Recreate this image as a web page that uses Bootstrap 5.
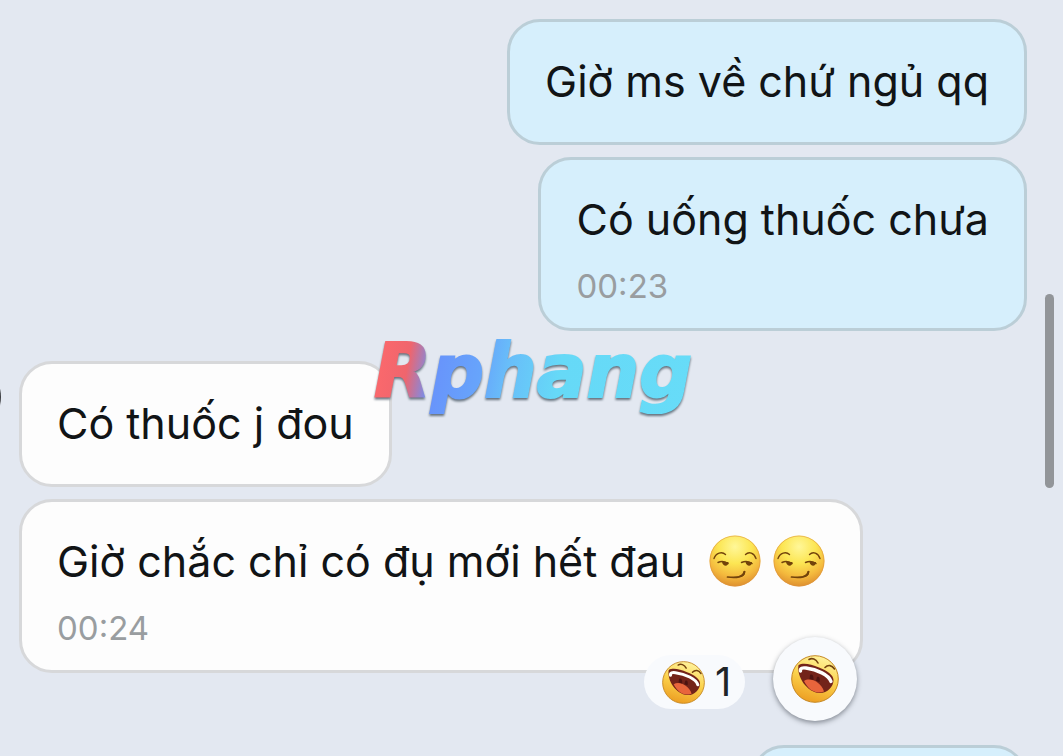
<!DOCTYPE html>
<html lang="vi">
<head>
<meta charset="utf-8">
<meta name="viewport" content="width=device-width, initial-scale=1">
<title>Chat</title>
<link href="https://cdn.jsdelivr.net/npm/bootstrap@5.3.0/dist/css/bootstrap.min.css" rel="stylesheet">
<style>
  body { background: #e3e8f1; font-family: Inter, "Noto Sans", sans-serif; color: #111416; }
  .chat { gap: 12px; padding: 19px 36px 0 19px; }
  .bubble { border: 3px solid #d7d8da; border-radius: 33px; background: #fdfdfd; padding: 32px 35px 34px; }
  .bubble.mine { background: #d6effc; border-color: #bbced7; }
  .bubble.timed { padding-bottom: 22px; }
  .bubble p { font-size: 43px; line-height: 54px; }
  .bubble time { font-size: 33px; line-height: 40px; margin-top: 20px; color: #999da0; }
  .group-start { margin-top: 18px; }
  .next-group { margin-top: 60px; min-width: 276px; min-height: 126px; }
  .with-faces { gap: 12px; }
  .smirk { width: 52px; height: 52px; }
  .reactions { right: 3px; bottom: -51px; gap: 28px; }
  .reactions button { background: #f8fafd; border: 0; color: #202427; }
  .tally { height: 54px; padding: 0 14px 0 18px; gap: 10px; margin-bottom: 12px; border-radius: 27px; font-size: 40px; line-height: 54px; }
  .tally svg { width: 43px; height: 43px; }
  .react { width: 84px; height: 84px; box-shadow: 0 2px 5px rgba(40, 45, 55, .5); }
  .react svg { width: 48px; height: 48px; }
  .avatar { width: 68px; height: 68px; left: -67px; top: 363px; background: #3c3e42; }
  .thumb { width: 9px; height: 194px; right: 9px; top: 294px; background: #929599; border-radius: 5px; }
  .watermark { left: 374px; top: 328px; font: italic bold 74px/86px "DejaVu Sans", sans-serif; color: transparent; -webkit-text-stroke: 2px transparent;
    background: linear-gradient(100deg, #ff6a6c 0%, #ef656d 12%, #6893fb 20%, #67a4fb 34%, #68bdf9 42%, #66d9f7 58%, #67dcf8 100%);
    -webkit-background-clip: text; background-clip: text; filter: drop-shadow(0 2px 1px #66737f); pointer-events: none; }
</style>
</head>
<body>
<svg class="position-absolute" width="0" height="0" aria-hidden="true">
  <defs>
    <radialGradient id="gold" cx=".5" cy=".22" r=".82">
      <stop offset="0" stop-color="#fff799"/><stop offset=".4" stop-color="#fce653"/><stop offset=".72" stop-color="#f4b93d"/><stop offset="1" stop-color="#d9862c"/>
    </radialGradient>
    <linearGradient id="sun" x1=".7" y1="0" x2=".4" y2="1">
      <stop offset="0" stop-color="#fff4a0"/><stop offset=".5" stop-color="#fbd24c"/><stop offset="1" stop-color="#ed9e22"/>
    </linearGradient>
  </defs>
  <symbol id="face-smirk" viewBox="0 0 52 52">
    <circle cx="26" cy="26" r="25.5" fill="url(#gold)"/>
    <circle cx="26" cy="26" r="25" fill="none" stroke="#dc9440" stroke-opacity=".55"/>
    <g fill="none" stroke="#72430b" stroke-linecap="round">
      <path stroke-width="1.4" d="M5 23.5C7 17.8 13 16.2 16.5 19.5M36.5 19.500C40 16.200 45 17.800 47 23.500"/>
      <path stroke-width="1.5" d="M9 27.500C12 26 16 26.500 19 28.500M32.500 27.500C36 26 40 26.500 43 28.500"/>
      <path stroke-width="1.7" d="M18.500 42C27 42.800 35.500 42.500 35.500 36.500"/>
    </g>
    <path fill="#72430b" d="M13 27h6.500c0 5-5.500 5-6.500 0zM36.500 27H43c0 5-5.500 5-6.500 0zM30 41c3-1 4-3 4.700-5h1.600c0 4-2.300 6-6.300 6z"/>
  </symbol>
  <symbol id="face-laugh" viewBox="0 0 48 48">
    <circle cx="24" cy="24" r="23.3" fill="url(#sun)" stroke="#c58722"/>
    <path d="M7.500 10C12 7.500 20 9 28 12.500 36 15.500 42.500 20 42.500 25 42.500 32 36 38.500 28 38 16 37 5.500 22 7.500 10z" fill="#73231a"/>
    <path d="M13 26C19 22 30 27 33 36.500 24 40 17 34 13 26z" fill="#e8653c"/>
    <path d="M19 20c2-1.500 4 .5 3.500 5l-4-1zM26 22c2-1 3.500.5 2.500 5l-3.500-1z" fill="#4d1311"/>
    <path d="M9.500 16C9 13 11.500 12.500 15 13 26 14.500 38 20 40 26.500" fill="none" stroke="#fff" stroke-width="3.400" stroke-linecap="round"/>
    <path d="M18 4.500C21 2.500 25 4 27 8M34 12.500C37 9.500 41 10 43.500 14" fill="none" stroke="#74420e" stroke-width="1.600" stroke-linecap="round"/>
  </symbol>
</svg>

<main class="chat position-relative vh-100 overflow-hidden d-flex flex-column align-items-start">
  <div class="avatar position-absolute rounded-circle"></div>

  <article class="bubble mine align-self-end flex-shrink-0"><p class="m-0">Giờ ms về chứ ngủ qq</p></article>
  <article class="bubble mine timed align-self-end flex-shrink-0">
    <p class="m-0">Có uống thuốc chưa</p>
    <time class="d-block">00:23</time>
  </article>

  <article class="bubble group-start flex-shrink-0"><p class="m-0">Có thuốc j đou</p></article>
  <article class="bubble timed position-relative flex-shrink-0">
    <p class="with-faces m-0 d-flex align-items-center">
      <span class="pe-2 me-1">Giờ chắc chỉ có đụ mới hết đau</span>
      <svg class="smirk" role="img" aria-label="😏"><use href="#face-smirk"/></svg>
      <svg class="smirk" role="img" aria-label="😏"><use href="#face-smirk"/></svg>
    </p>
    <time class="d-block">00:24</time>
    <div class="reactions position-absolute d-flex align-items-end">
      <button type="button" class="tally d-flex align-items-center"><svg aria-hidden="true"><use href="#face-laugh"/></svg><span>1</span></button>
      <button type="button" class="react rounded-circle p-0 d-flex align-items-center justify-content-center" aria-label="Haha"><svg aria-hidden="true"><use href="#face-laugh"/></svg></button>
    </div>
  </article>

  <article class="bubble mine next-group align-self-end flex-shrink-0"></article>

  <div class="watermark position-absolute">Rphang</div>
  <div class="thumb position-absolute"></div>
</main>
<script src="https://cdn.jsdelivr.net/npm/bootstrap@5.3.0/dist/js/bootstrap.bundle.min.js"></script>
</body>
</html>
